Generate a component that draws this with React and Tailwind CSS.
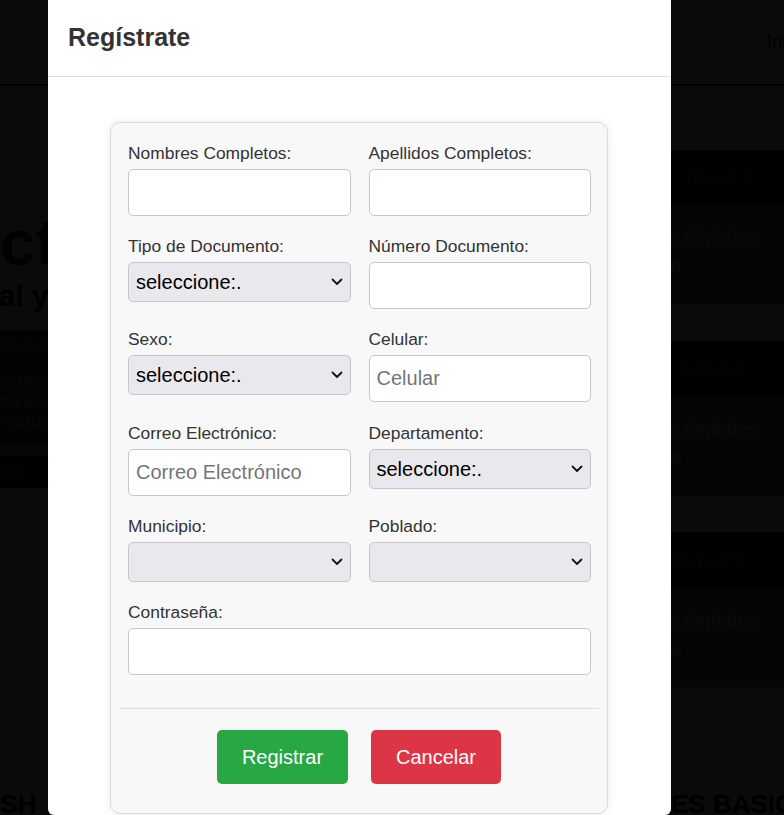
import { useState } from "react";

const font = "font-['Liberation_Sans',Arial,sans-serif]";

function Chevron() {
  return (
    <svg
      className="pointer-events-none absolute right-[8px] top-1/2 -translate-y-1/2"
      width="12"
      height="8"
      viewBox="0 0 12 8"
      fill="none"
    >
      <path d="M1.5 1.5 L6 6 L10.5 1.5" stroke="#111" strokeWidth="1.8" strokeLinecap="round" strokeLinejoin="round" />
    </svg>
  );
}

function Campo({ label, children, className = "" }) {
  return (
    <div className={className}>
      <label className="mb-[6px] block text-[17.4px] leading-[20px] text-[#333]">{label}</label>
      {children}
    </div>
  );
}

function Entrada({ placeholder, type = "text" }) {
  return (
    <input
      type={type}
      placeholder={placeholder}
      className="block h-[47px] w-full rounded-[5px] border border-[#c8c8c8] bg-white px-[7px] text-[20px] text-black outline-none placeholder:text-[#757575]"
    />
  );
}

function Selector({ opciones = [] }) {
  return (
    <div className="relative">
      <select className="block h-[40px] w-full appearance-none rounded-[5px] border border-[#c6c6cc] bg-[#e9e9ed] px-[7px] text-[20px] text-black outline-none">
        {opciones.map((o) => (
          <option key={o}>{o}</option>
        ))}
      </select>
      <Chevron />
    </div>
  );
}

// Página de fondo (queda tapada por el modal)
function PaginaFondo() {
  return (
    <div className="-ml-[200px] w-[1226px] bg-white">
      <header className="flex h-[86px] items-center border-b-[2px] border-[#000] pl-[40px] pr-[40px]">
        <span className="text-[28px] font-bold text-[#28a745]">EduVirtual</span>
        <nav className="ml-auto flex gap-[24px] text-[18px] text-[#000]">
          <span>Inicio</span>
          <span>Cursos</span>
          <span>Contacto</span>
        </nav>
      </header>
      <main className="flex">
        <section className="w-[560px] pl-[40px] pt-[122px]">
          <h1 className="text-[64px] font-bold leading-[70px] text-[#0f3d18]">Conecta</h1>
          <h2 className="ml-[-28px] text-[30px] font-bold leading-[36px] text-[#000]">Entorno digital y accesible</h2>
          <div className="mt-[16px] -ml-[40px] bg-[#3a5a3a] py-[3px] pl-[100px] text-[22px] font-bold leading-[26px] text-[#666]">
            Calidad educativa
          </div>
          <div className="-ml-[40px] bg-[#555] py-[10px] pl-[110px] text-[19px] leading-[20px] text-[#bbb]">
            <p>
              <span className="text-[#7a4a10]">Conocer</span> los recursos
            </p>
            <p>para tus actividades</p>
            <p>en la clase virtual</p>
          </div>
          <div className="-ml-[40px] h-[14px] bg-[#999]" />
          <div className="ml-[60px] w-[200px] bg-[#4a2a00] py-[4px] text-[22px] leading-[24px] text-[#555]">
            Ingresa Aquí
          </div>
        </section>
        <section className="flex-1 pt-[64px]">
          {["Comunicación", "Colaboración", "Organización"].map((t, i) => (
            <div key={t} className="mb-[36px]">
              <div className="flex h-[56px] items-center bg-[#0a1f0a] pl-[66px] text-[20px] tracking-[1px] text-[#555]">
                {t} teamwork - level {i + 1}
              </div>
              <div className="bg-[#888] pb-[25px] pl-[40px] pt-[18px] text-[20px] leading-[28px] text-[#ddd]">
                <p>Uso adecuado de herramientas digitales</p>
                <p>para la comunicación en el aula</p>
              </div>
            </div>
          ))}
        </section>
      </main>
      <div className="flex pt-[62px] text-[26px] font-bold text-black">
        <p className="w-[560px] pl-[121px]">ENGLISH</p>
        <p className="pl-[168px]">HABILIDADES BASICAS</p>
      </div>
    </div>
  );
}

export default function App() {
  const [abierto] = useState(true);

  return (
    <div className={`relative h-[815px] overflow-hidden ${font}`}>
      <PaginaFondo />

      {abierto && (
        <div className="fixed inset-0 overflow-hidden bg-black/[0.96]">
          <div className="ml-[48px] min-h-full w-[623px] rounded-b-[6px] bg-white">
            {/* Encabezado */}
            <div className="flex h-[77px] items-center border-b border-[#dee2e6] pl-[20px]">
              <h5 className="text-[25px] font-bold text-[#333]">Regístrate</h5>
            </div>

            {/* Cuerpo */}
            <div className="pt-[45px]">
              <form className="ml-[62px] w-[498px] rounded-[10px] border border-[#dcdcdc] bg-[#f8f8f8] pb-[29px] pt-[20px] shadow-[0_0_8px_rgba(0,0,0,0.08)]">
                <div className="grid grid-cols-2 gap-x-[18px] gap-y-[20.2px] pl-[17px] pr-[16px]">
                  <Campo label="Nombres Completos:">
                    <Entrada />
                  </Campo>
                  <Campo label="Apellidos Completos:">
                    <Entrada />
                  </Campo>

                  <Campo label="Tipo de Documento:">
                    <Selector opciones={["seleccione:."]} />
                  </Campo>
                  <Campo label="Número Documento:">
                    <Entrada />
                  </Campo>

                  <Campo label="Sexo:">
                    <Selector opciones={["seleccione:."]} />
                  </Campo>
                  <Campo label="Celular:">
                    <Entrada placeholder="Celular" />
                  </Campo>

                  <Campo label="Correo Electrónico:">
                    <Entrada placeholder="Correo Electrónico" type="email" />
                  </Campo>
                  <Campo label="Departamento:">
                    <Selector opciones={["seleccione:."]} />
                  </Campo>

                  <Campo label="Municipio:">
                    <Selector />
                  </Campo>
                  <Campo label="Poblado:">
                    <Selector />
                  </Campo>

                  <Campo label="Contraseña:" className="col-span-2">
                    <Entrada type="password" />
                  </Campo>
                </div>

                <hr className="mx-[8px] mt-[33px] border-t border-[#dcdcdc]" />

                <div className="mt-[21px] flex justify-center gap-[23px]">
                  <button
                    type="button"
                    className="h-[54px] w-[131px] rounded-[5px] bg-[#28a745] text-[20px] text-white"
                  >
                    Registrar
                  </button>
                  <button
                    type="button"
                    className="h-[54px] w-[130px] rounded-[5px] bg-[#dc3545] text-[20px] text-white"
                  >
                    Cancelar
                  </button>
                </div>
              </form>
            </div>
          </div>
        </div>
      )}
    </div>
  );
}
